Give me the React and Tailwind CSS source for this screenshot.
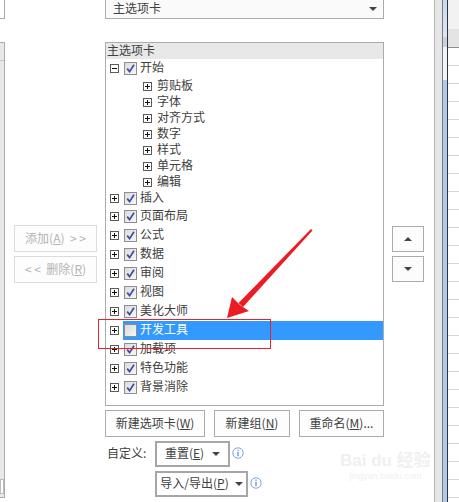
import React from "react";

const topItems = [
  { label: "插入", h: "h-[17px]" },
  { label: "页面布局" },
  { label: "公式" },
  { label: "数据" },
  { label: "审阅" },
  { label: "视图" },
  { label: "美化大师" },
  { label: "开发工具", selected: true },
  { label: "加载项" },
  { label: "特色功能" },
  { label: "背景消除" },
];

const subItems = ["剪贴板", "字体", "对齐方式", "数字", "样式", "单元格", "编辑"];

const Expander = ({ open }) => (
  <svg width="9" height="9" viewBox="0 0 9 9" className="shrink-0">
    <rect x="0.5" y="0.5" width="8" height="8" fill="#fff" stroke="#5a5a5a" />
    <line x1="2" y1="4.5" x2="7" y2="4.5" stroke="#111" />
    {!open && <line x1="4.5" y1="2" x2="4.5" y2="7" stroke="#111" />}
  </svg>
);

const Check = ({ checked }) => (
  <div className="w-[13px] h-[13px] shrink-0 border border-[#8e8e8e] bg-gradient-to-br from-[#dcdcdc] to-[#f6f6f6] flex items-center justify-center">
    {checked && (
      <svg width="11" height="11" viewBox="0 0 11 11">
        <path d="M2.2 5.6 L4.6 8.6 L9 1.8" fill="none" stroke="#3a4c9e" strokeWidth="1.7" />
      </svg>
    )}
  </div>
);

const Info = () => (
  <svg width="12" height="12" viewBox="0 0 12 12" className="shrink-0">
    <circle cx="6" cy="6" r="5.2" fill="#fff" stroke="#7aa6da" />
    <rect x="5.4" y="2.6" width="1.2" height="1.2" fill="#4f86cc" />
    <rect x="5.4" y="4.8" width="1.2" height="4.4" fill="#4f86cc" />
  </svg>
);

const Caret = () => (
  <span className="inline-block w-0 h-0 border-l-[4px] border-r-[4px] border-t-[4px] border-l-transparent border-r-transparent border-t-[#444]" />
);

const TopRow = ({ label, open, selected, h }) => (
  <div className={`flex items-center pl-[4px] ${h || "h-[19px]"}`}>
    <Expander open={open} />
    <div className={`flex items-center flex-1 h-full ml-[4px] pl-[1px] ${selected ? "bg-[#3399ff]" : ""}`}>
      <Check checked={!selected} />
      <span className={`ml-[3px] pb-[3px] ${selected ? "text-white" : "text-[#404040]"}`}>{label}</span>
    </div>
  </div>
);

const App = () => {
  return (
    <div className="relative w-[459px] h-[502px] overflow-hidden bg-white flex text-[12px] leading-none font-['Noto_Sans_CJK_SC','Microsoft_YaHei',sans-serif]">
      {/* left column */}
      <div className="w-[105px] shrink-0 flex">
        <div className="w-[5px] shrink-0">
          <div className="h-[19px] border-r border-b border-[#ababab]" />
          <div className="mt-[23px] h-[456px] border-t border-r border-b border-[#ababab] bg-[#e8e8e8] flex flex-col">
            <div className="h-[18px] border-b border-[#c4c4c4]" />
            <div className="flex-1" />
            <div className="h-[15px] mb-[3px] border border-[#bcbcbc] bg-white" />
          </div>
        </div>
        <div className="pl-[9px] pt-[225px] flex flex-col gap-[4px]">
          <div className="w-[83px] h-[27px] border border-[#dcdcdc] bg-[#fdfdfd] flex items-center justify-center text-[#b4b4b4]">
            <span className="pb-[2px]">
              添加(<span className="underline">A</span>)&nbsp;&nbsp;&gt;&nbsp;&gt;
            </span>
          </div>
          <div className="w-[83px] h-[27px] border border-[#dcdcdc] bg-[#fdfdfd] flex items-center justify-center text-[#b4b4b4]">
            <span className="pb-[2px]">
              &lt;&nbsp;&lt;&nbsp;&nbsp;删除(<span className="underline">R</span>)
            </span>
          </div>
        </div>
      </div>

      {/* center column */}
      <div className="w-[279px] shrink-0 flex flex-col">
        <div className="h-[19px] border-x border-b border-[#ababab] bg-[#fafafa] flex items-center justify-between pl-[7px] pr-[6px] text-[#404040]">
          <span className="pb-[2px]">主选项卡</span>
          <Caret />
        </div>

        <div className="mt-[23px] h-[364px] border border-[#ababab] bg-white flex flex-col">
          <div className="h-[16px] bg-[#e8e8e8] flex items-center pl-[1px] text-[#404040]">
            <span className="pb-[2px]">主选项卡</span>
          </div>
          <TopRow label="开始" open />
          {subItems.map((s) => (
            <div key={s} className="h-[16px] flex items-center pl-[37px]">
              <Expander />
              <span className="ml-[5px] pb-[3px] text-[#404040]">{s}</span>
            </div>
          ))}
          {topItems.map((t) => (
            <TopRow key={t.label} label={t.label} selected={t.selected} h={t.h} />
          ))}
        </div>

        <div className="mt-[4px] flex gap-[9px] text-[#404040]">
          <div className="w-[100px] h-[27px] border border-[#ababab] bg-[#fdfdfd] flex items-center justify-center">
            <span className="pb-[2px]">
              新建选项卡(<span className="underline">W</span>)
            </span>
          </div>
          <div className="w-[76px] h-[27px] border border-[#ababab] bg-[#fdfdfd] flex items-center justify-center">
            <span className="pb-[2px]">
              新建组(<span className="underline">N</span>)
            </span>
          </div>
          <div className="w-[85px] h-[27px] border border-[#ababab] bg-[#fdfdfd] flex items-center justify-center">
            <span className="pb-[2px]">
              重命名(<span className="underline">M</span>)...
            </span>
          </div>
        </div>

        <div className="mt-[4px] flex items-center text-[#404040]">
          <span className="w-[50px] pl-[2px] pb-[2px]">自定义:</span>
          <div className="w-[75px] h-[26px] border-2 border-[#a6a6a6] bg-white flex items-center justify-center gap-[8px]">
            <span className="pb-[2px]">
              重置(<span className="underline">E</span>)
            </span>
            <Caret />
          </div>
          <div className="ml-[2px] -mt-[3px]">
            <Info />
          </div>
        </div>

        <div className="mt-[4px] flex items-center text-[#404040]">
          <div className="w-[50px]" />
          <div className="w-[93px] h-[26px] border-2 border-[#a6a6a6] bg-white flex items-center justify-center gap-[6px]">
            <span className="pb-[2px]">
              导入/导出(<span className="underline">P</span>)
            </span>
            <Caret />
          </div>
          <div className="ml-[2px] -mt-[3px]">
            <Info />
          </div>
        </div>
      </div>

      {/* right column with up/down */}
      <div className="w-[50px] shrink-0 pl-[8px] pt-[226px] flex flex-col gap-[4px]">
        <div className="w-[32px] h-[26px] border border-[#ababab] bg-[#fcfcfc] flex items-center justify-center">
          <span className="inline-block w-0 h-0 border-l-[4px] border-r-[4px] border-b-[4px] border-l-transparent border-r-transparent border-b-[#444]" />
        </div>
        <div className="w-[32px] h-[26px] border border-[#ababab] bg-[#fcfcfc] flex items-center justify-center">
          <Caret />
        </div>
      </div>

      {/* window edge and sheet */}
      <div className="w-[8px] shrink-0 border-l border-[#b4b4b4] bg-[#e6e6e6]" />
      <div className="w-[1px] shrink-0 bg-[#7a7a7a]" />
      <div className="w-[4px] shrink-0 flex flex-col">
        <div className="h-[37px] bg-gradient-to-b from-[#c4dbf4] to-[#dbe8f7]" />
        <div className="h-[10px] bg-[#c9d3de]" />
        <div className="h-[33px] bg-[#eef4fb]" />
        <div className="flex-1 bg-[#aecbef]" />
      </div>
      <div className="w-[1px] shrink-0 bg-[#333]" />
      <div className="flex-1 flex flex-col">
        <div className="h-[29px] bg-[#f2f2f2]" />
        <div className="h-[19px] bg-[#e4e4e4] border-b border-[#8c8c8c]" />
        {Array.from({ length: 25 }).map((_, i) => (
          <div key={i} className="h-[18px] shrink-0 border-b border-[#d6d6d6]" />
        ))}
      </div>

      {/* highlight box and arrow */}
      <div className="absolute left-[98px] top-[319px] w-[173px] h-[30px] border border-[#e0242a]" />
      <svg className="absolute left-0 top-0" width="459" height="502" viewBox="0 0 459 502">
        <polygon points="311,229 312.5,230.5 243,307 238.5,303" fill="#ec1c24" />
        <polygon points="227,318 232,297 240,305 249,311" fill="#ec1c24" />
      </svg>

      {/* watermark */}
      <div className="absolute left-[340px] top-[452px] flex flex-col items-center text-[#f0f0f0] pointer-events-none">
        <span className="text-[17px] font-bold font-['Liberation_Sans','Noto_Sans_CJK_SC',sans-serif]">Bai du 经验</span>
        <span className="mt-[3px] text-[9px] font-['Liberation_Sans',sans-serif]">jingyan.baidu.com</span>
      </div>
    </div>
  );
};

export default App;
